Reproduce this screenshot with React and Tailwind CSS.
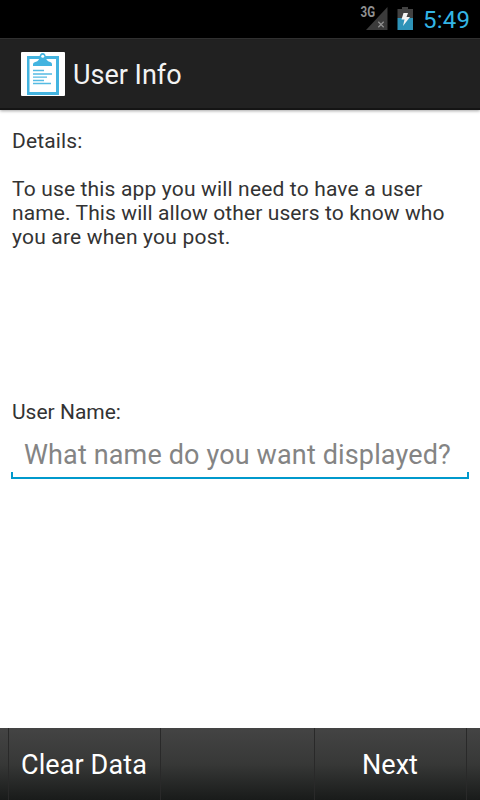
function StatusBar() {
  return (
    <div className="flex h-[38px] bg-black">
      <svg className="ml-[360px] h-[38px] w-[60px] shrink-0" viewBox="0 0 60 38">
        <text x="0.5" y="17" fontSize="14" fontWeight="700" fill="#919191" fontFamily="Roboto" textLength="14.5" lengthAdjust="spacingAndGlyphs">3G</text>
        <path d="M27.500 7V30H6Z" fill="#3b3b3b" />
        <path d="M18.300 21.800L23.700 27.200M23.700 21.800L18.300 27.200" stroke="#8f8f8f" strokeWidth="1.300" />
        <path d="M42 7h6v2h5v9H37.500V9H42Z" fill="#424242" />
        <rect x="37.500" y="18" width="15.500" height="12" fill="#2e93b8" />
        <path d="M43.500 13H48L46.500 17H50L43 26L44.500 19.500H41.500Z" fill="#f4f4f4" />
      </svg>
      <span className="ml-[3px] text-[24px] leading-[41px] tracking-[0.2px] text-[#33b5e5]">5:49</span>
    </div>
  );
}

function Clipboard() {
  return (
    <svg className="h-11 w-11 shrink-0" viewBox="0 0 44 44">
      <rect width="44" height="44" rx="1" fill="#fff" />
      <path d="M6 4h32v39H6Z" fill="#43b4e0" />
      <path d="M8.500 7h26.500v33H8.500Z" fill="#fff" />
      <path d="M12 14V12.500C12 11 13 10.300 15 9.800C17 9.200 18 7.500 18.500 6C18.300 3 19.500 1 21.700 1S25 3 24.900 6C25.400 7.500 26.500 9.200 28.500 9.800C30.300 10.300 31 11 31 12.500V14Z" fill="#43b4e0" />
      <circle cx="21.700" cy="4.300" r="1.500" fill="#fff" />
      <path d="M12 18.500h11M12 22h19M12 25.200h14M12 28.500h11M12 31.500h18" stroke="#55bbe3" strokeWidth="1.300" />
    </svg>
  );
}

export default function App() {
  return (
    <div className="flex h-[800px] w-[480px] flex-col overflow-hidden bg-white font-['Roboto',sans-serif]">
      <StatusBar />
      <header className="flex h-[72px] shrink-0 items-center border-t border-b-2 border-t-[#303030] border-b-[#141414] bg-[#212121] pl-[21px] shadow-[0_1px_3px_rgba(0,0,0,0.35)]">
        <Clipboard />
        <h1 className="ml-2 pt-[2px] text-[27px] leading-8 text-[#f3f3f3]">User Info</h1>
      </header>
      <main className="flex grow flex-col px-3 pt-[19px] text-[21px] leading-6 text-[#333]">
        <p className="tracking-[0.15px]">Details:</p>
        <p className="mt-6 whitespace-nowrap">
          <span className="tracking-[0.16px]">To use this app you will need to have a user</span><br />
          <span className="tracking-[0.1px]">name. This will allow other users to know who</span><br />
          <span className="tracking-[0.2px]">you are when you post.</span>
        </p>
        <label className="mt-[151px]">User Name:</label>
        <div className="-mx-px mt-3 flex h-[43px] flex-col">
          <span className="h-[36px] pl-[13px] text-[27px] leading-[38px] tracking-[0.14px] whitespace-nowrap text-[#848484]">What name do you want displayed?</span>
          <span className="h-[7px] border-x-2 border-b-2 border-[#0099cc]" />
        </div>
      </main>
      <footer className="flex h-[72px] shrink-0 bg-linear-to-b from-[#444] via-[#373837] to-[#191b1a] text-[27px] leading-[74px] text-white">
        <div className="w-[9px] border-r border-[#292929]" />
        <div className="w-[152px] border-r border-[#292929] pl-3 tracking-[0.1px] whitespace-nowrap">Clear Data</div>
        <div className="w-[154px] border-r border-[#292929]" />
        <div className="w-[152px] border-r border-[#292929] pr-px text-center">Next</div>
      </footer>
    </div>
  );
}
